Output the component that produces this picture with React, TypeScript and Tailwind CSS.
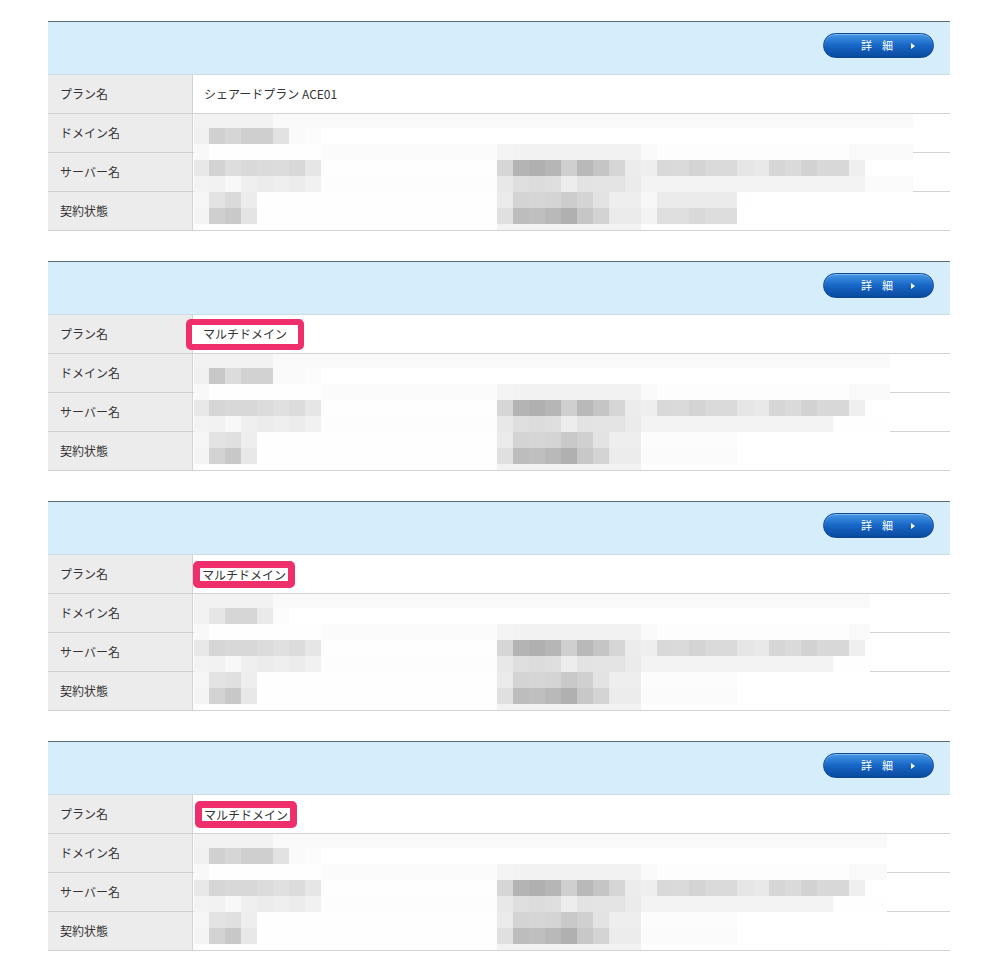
import React from "react"

const labels = ["プラン名", "ドメイン名", "サーバー名", "契約状態"]

// pixelated (redacted) area, one string per mosaic row, 2-hex gray per 16px cell, "ggxN" = repeat
const baseRows = [
  "f2x5 f9x40",
  "f0 d0 d6 cf cf e2 fa fc ffx37",
  "f8 fex7 fbx11 f4 f2x8 f9 fdx12 f9x4",
  "e8 d3 dd d9 db dc d8 e6 fex11 d6 b4 b0 b6 cf b9 c5 d5 ec ee d9 da d4 da da e6 e9 d6 da d2 d8 d8 ef ffx3",
  "f3 f2 f8 ef ec ef ec f1 fdx11 e8 de dc de ed e3 e4 e4 eb f3x14 fbx3",
  "f6 e3 da ec fex15 eb d4 d6 d4 cd d4 e3 ee ee f7 ebx5 fe ffx10",
  "f4 cf c9 e4 fex15 e0 bd bf b9 b0 c6 d3 eb eb f3 de de d9 dd dd ffx11",
  "fdx19 f3x9 fex17",
]

const otherRows = [
  "f2x5 f9x40",
  "f0 c8 dc d2 d2 fa fa fc ffx37",
  "f8 fex7 fbx11 f4 f2x8 f9 fdx12 f9x4",
  "e8 d6 d8 d8 dc e0 dc e6 fex11 d6 b4 b0 b6 cf b9 c5 d5 ec ee d9 da d4 da da e6 e9 d6 da d2 d8 d8 ef ffx3",
  "f3 f2 f8 ef ec ef ec f1 fdx11 e8 de dc de ed e3 e4 e4 eb f3x12 fex5",
  "f6 e3 e0 ee fex15 eb d4 d6 d4 c9 d0 e3 ee ee fcx6 ffx11",
  "f4 d3 c8 e8 fex15 e0 bd bf b9 b0 c8 d4 ec ec fbx6 ffx11",
  "fdx19 f1x9 fex17",
]

const rowHeights = ["h-[14px]", "h-4", "h-4", "h-4", "h-4", "h-4", "h-4", "h-[6px]"]

function expand(row: string) {
  const out: string[] = []
  row.split(" ").forEach((tok) => {
    const [g, n] = tok.split("x")
    const count = n ? parseInt(n, 10) : 1
    for (let i = 0; i < count; i++) out.push(`#${g}${g}${g}`)
  })
  return out
}

function Mosaic({ rows, width }: { rows: string[]; width: string }) {
  return (
    <div className={`absolute left-[146px] top-[39px] overflow-hidden ${width}`}>
      {rows.map((r, i) => (
        <div key={i} className={`flex ${rowHeights[i]}`}>
          {expand(r).map((c, j) => (
            <div
              key={j}
              className={j === 0 ? "w-[15px] shrink-0" : "w-4 shrink-0"}
              style={{ backgroundColor: c }}
            />
          ))}
        </div>
      ))}
    </div>
  )
}

function DetailButton() {
  return (
    <button className="flex h-[25px] w-[111px] items-center rounded-full border border-[#0b4791] bg-linear-to-b from-[#4596e6] via-[#1766c6] to-[#0a4a9f] text-[11px] text-white shadow-[inset_0_1px_0_rgba(255,255,255,0.35)]">
      <span className="ml-[37px] flex gap-[10px] leading-none">
        <span>詳</span>
        <span>細</span>
      </span>
      <svg className="ml-[18px]" width="4" height="6" viewBox="0 0 4 6">
        <polygon points="0,0 4,3 0,6" fill="#fff" />
      </svg>
    </button>
  )
}

function PlanValue({ kind }: { kind: string }) {
  if (kind === "shared") return <span className="pl-[11px]">シェアードプラン ACE01</span>
  if (kind === "wide")
    return (
      <span className="-ml-[7px] flex h-[31px] items-center rounded-[5px] border-[6px] border-[#ef2f6c] bg-white px-[11px]">
        マルチドメイン
      </span>
    )
  return (
    <span
      className={`flex h-[27px] items-center rounded-[5px] border-[7px] border-[#ef2f6c] bg-white px-[2px] leading-[13px] ${
        kind === "tight4" ? "ml-[2px]" : "ml-0"
      }`}
    >
      マルチドメイン
    </span>
  )
}

const cards = [
  { plan: "shared", rows: baseRows, width: "w-[723px]" },
  { plan: "wide", rows: otherRows, width: "w-[696px]" },
  {
    plan: "tight",
    rows: [otherRows[0], "f2 e6 d6 d6 ea fc ffx39", ...otherRows.slice(2)],
    width: "w-[676px]",
  },
  { plan: "tight4", rows: [otherRows[0], baseRows[1], ...otherRows.slice(2)], width: "w-[693px]" },
]

export default function App() {
  return (
    <div
      className="min-h-screen bg-white px-[48px] pt-[21px] text-[12px] text-[#333]"
      style={{ fontFamily: '"Noto Sans CJK JP", "Noto Sans", sans-serif' }}
    >
      <div className="flex w-[902px] flex-col gap-[30px]">
        {cards.map((card, ci) => (
          <div key={ci} className="border-t border-[#5b6b75]">
            <div className="flex h-[53px] items-start justify-end border-b border-[#cbdce7] bg-[#d6eefb] pr-4 pt-[11px]">
              <DetailButton />
            </div>
            <div className="relative">
              {labels.map((label, i) => (
                <div key={label} className="flex h-[39px] border-b border-[#d3d3d3]">
                  <div className="flex w-[145px] items-center border-r border-[#d3d3d3] bg-[#ececec] pl-3">
                    {label}
                  </div>
                  <div className="flex flex-1 items-center bg-white">
                    {i === 0 && <PlanValue kind={card.plan} />}
                  </div>
                </div>
              ))}
              <Mosaic rows={card.rows} width={card.width} />
            </div>
          </div>
        ))}
      </div>
    </div>
  )
}
